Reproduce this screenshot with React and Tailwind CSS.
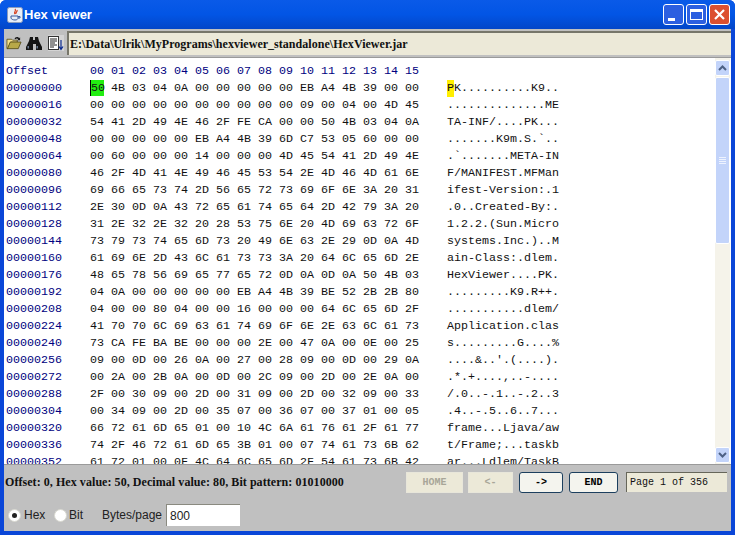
const rows = [
  "50 4B 03 04 0A 00 00 00 00 00 EB A4 4B 39 00 00",
  "00 00 00 00 00 00 00 00 00 00 09 00 04 00 4D 45",
  "54 41 2D 49 4E 46 2F FE CA 00 00 50 4B 03 04 0A",
  "00 00 00 00 00 EB A4 4B 39 6D C7 53 05 60 00 00",
  "00 60 00 00 00 14 00 00 00 4D 45 54 41 2D 49 4E",
  "46 2F 4D 41 4E 49 46 45 53 54 2E 4D 46 4D 61 6E",
  "69 66 65 73 74 2D 56 65 72 73 69 6F 6E 3A 20 31",
  "2E 30 0D 0A 43 72 65 61 74 65 64 2D 42 79 3A 20",
  "31 2E 32 2E 32 20 28 53 75 6E 20 4D 69 63 72 6F",
  "73 79 73 74 65 6D 73 20 49 6E 63 2E 29 0D 0A 4D",
  "61 69 6E 2D 43 6C 61 73 73 3A 20 64 6C 65 6D 2E",
  "48 65 78 56 69 65 77 65 72 0D 0A 0D 0A 50 4B 03",
  "04 0A 00 00 00 00 00 EB A4 4B 39 BE 52 2B 2B 80",
  "04 00 00 80 04 00 00 16 00 00 00 64 6C 65 6D 2F",
  "41 70 70 6C 69 63 61 74 69 6F 6E 2E 63 6C 61 73",
  "73 CA FE BA BE 00 00 00 2E 00 47 0A 00 0E 00 25",
  "09 00 0D 00 26 0A 00 27 00 28 09 00 0D 00 29 0A",
  "00 2A 00 2B 0A 00 0D 00 2C 09 00 2D 00 2E 0A 00",
  "2F 00 30 09 00 2D 00 31 09 00 2D 00 32 09 00 33",
  "00 34 09 00 2D 00 35 07 00 36 07 00 37 01 00 05",
  "66 72 61 6D 65 01 00 10 4C 6A 61 76 61 2F 61 77",
  "74 2F 46 72 61 6D 65 3B 01 00 07 74 61 73 6B 62",
  "61 72 01 00 0F 4C 64 6C 65 6D 2F 54 61 73 6B 42",
];

const headers = ["00", "01", "02", "03", "04", "05", "06", "07", "08", "09", "10", "11", "12", "13", "14", "15"];

const toChar = (hex) => {
  const n = parseInt(hex, 16);
  return n > 32 && n < 127 ? String.fromCharCode(n) : ".";
};

function HexRow({ index, bytes }) {
  const offset = String(index * 16).padStart(8, "0");
  return (
    <div className="flex h-[17px] items-center leading-[17px]">
      <span className="w-[84px] shrink-0 text-[#000080]">{offset}</span>
      <div className="flex w-[357px] shrink-0">
        {bytes.map((b, i) => (
          <span key={i} className="w-[21px] shrink-0">
            <span className={i === 0 && index === 0 ? "inline-block h-[16px] w-[14px] border-l border-black bg-[#22ee11] leading-[16px]" : ""}>{b}</span>
          </span>
        ))}
      </div>
      <div className="flex">
        {bytes.map((b, i) => (
          <span key={i} className={i === 0 && index === 0 ? "w-[7px] bg-[#ffee00]" : "w-[7px]"}>{toChar(b)}</span>
        ))}
      </div>
    </div>
  );
}

function TitleButton({ children, className }) {
  return (
    <div className={"flex h-[21px] w-[21px] items-center justify-center rounded-[3px] border border-white " + className}>
      {children}
    </div>
  );
}

function JavaIcon() {
  return (
    <svg width="16" height="16" viewBox="0 0 16 16">
      <rect x="0.5" y="0.5" width="15" height="15" rx="2" fill="#e8eef8" stroke="#8a9bbd" />
      <path d="M8 2c2 2-2 3 0 5M10 3c1 2-2 2-1 4" fill="none" stroke="#d8401c" strokeWidth="1.2" />
      <path d="M4 9h7v2c0 1-1 2-3 2s-4-1-4-2zM11 9.5h2v1.5h-2" fill="none" stroke="#3a5a9c" strokeWidth="1" />
    </svg>
  );
}

function FolderIcon() {
  return (
    <svg width="16" height="16" viewBox="0 0 17 16">
      <path d="M1 4h5l1 1h5v2H5L2 14H1z" fill="#f6e08a" stroke="#4a4010" strokeWidth="0.8" />
      <path d="M4.5 7H16l-3 7H1.5z" fill="#b8a848" stroke="#4a4010" strokeWidth="0.8" />
      <path d="M9 3c2-2 4-2 5 0l1-1v3h-3l1-1c-1-1-2-1-3 0z" fill="#1a1a1a" />
    </svg>
  );
}

function BinocularsIcon() {
  return (
    <svg width="16" height="15" viewBox="0 0 16 15" fill="#151515">
      <path d="M4 1h3v3h2V1h3l1 4 3 6v3h-6V8H7v6H0v-3l3-6z" />
      <rect x="1.5" y="10" width="1.5" height="2.5" fill="#6a7a90" />
      <rect x="10.5" y="10" width="1.5" height="2.5" fill="#6a7a90" />
    </svg>
  );
}

function SortIcon() {
  return (
    <svg width="16" height="16" viewBox="0 0 16 16">
      <rect x="0.5" y="1.5" width="10" height="13" fill="#fff" stroke="#333" />
      <path d="M2 4h7M2 6h7M2 8h5M2 10h7M2 12h4" stroke="#222" strokeWidth="1" />
      <path d="M13 5v9M11 11.5l2 3 2-3" fill="none" stroke="#0a2a90" strokeWidth="1.2" />
    </svg>
  );
}

function ScrollArrow({ up }) {
  return (
    <div className="flex h-[16px] w-[15px] items-center justify-center rounded-[2px] border border-white bg-[#c3d4fa]">
      <svg width="9" height="6" viewBox="0 0 9 6">
        <path d={up ? "M1 5l3.5-3.5L8 5" : "M1 1l3.5 3.5L8 1"} fill="none" stroke="#4d6185" strokeWidth="2" />
      </svg>
    </div>
  );
}

function NavButton({ label, width, disabled }) {
  const look = disabled
    ? "border-[#e8e6da] bg-[#ece9d8] text-[#a8a698] rounded-none"
    : "border-[#1c3f5e] bg-[#f4f4ee] text-black rounded-[3px]";
  return (
    <div className={"flex h-[21px] items-center justify-center border font-['Liberation_Mono',monospace] text-[10px] font-bold " + width + " " + look}>
      {label}
    </div>
  );
}

function Radio({ checked }) {
  return (
    <div className="flex h-[13px] w-[13px] items-center justify-center rounded-full border border-[#d8d8d0] bg-white">
      {checked && <div className="h-[5px] w-[5px] rounded-full bg-[#222]" />}
    </div>
  );
}

export default function App() {
  return (
    <div className="flex h-[535px] w-[735px] flex-col overflow-hidden rounded-t-[6px] bg-[#0a46d8]">
      <div className="flex h-[29px] shrink-0 items-center bg-gradient-to-b from-[#0a5ae8] via-[#0255e5] to-[#0346c8] pl-[7px] pr-[5px]">
        <JavaIcon />
        <span className="ml-[1px] pt-[1px] font-['Liberation_Sans',sans-serif] text-[13px] font-bold text-white">Hex viewer</span>
        <div className="ml-auto flex gap-[2px]">
          <TitleButton className="bg-[#2c5fe0]">
            <div className="mr-[5px] mt-[9px] h-[3px] w-[7px] bg-white" />
          </TitleButton>
          <TitleButton className="bg-[#2c5fe0]">
            <div className="h-[11px] w-[13px] border border-t-[3px] border-white" />
          </TitleButton>
          <TitleButton className="bg-[#dc5030]">
            <svg width="13" height="13" viewBox="0 0 13 13">
              <path d="M2 2l9 9M11 2l-9 9" stroke="#fff" strokeWidth="2.2" />
            </svg>
          </TitleButton>
        </div>
      </div>

      <div className="mx-[4px] mb-[4px] flex min-h-0 flex-1 flex-col bg-[#c0c0c0]">
        <div className="flex h-[29px] shrink-0 items-center border-b border-[#9a9a9a] pl-[2px]">
          <div className="flex w-[61px] shrink-0 items-center gap-[4px]">
            <FolderIcon />
            <BinocularsIcon />
            <div className="ml-[2px] bg-[#d4d4d4]">
              <SortIcon />
            </div>
          </div>
          <div className="flex h-[24px] flex-1 items-center border-l-2 border-t-2 border-[#77766a] bg-[#ece9d8] pl-[1px] font-['Liberation_Serif',serif] text-[12px] font-bold tracking-[0.03px] text-[#111]">
            {"E:\\Data\\Ulrik\\MyPrograms\\hexviewer_standalone\\HexViewer.jar"}
          </div>
        </div>

        <div className="flex h-[407px] shrink-0 overflow-hidden border-b border-[#9a9a9a] bg-white">
          <div className="min-w-0 flex-1 overflow-hidden whitespace-pre pl-[2px] pt-[5px] font-['Liberation_Mono',monospace] text-[11.67px] text-[#111]">
            <div className="flex h-[17px] items-center text-[#000080]">
              <span className="w-[84px] shrink-0">Offset</span>
              {headers.map((h) => (
                <span key={h} className="w-[21px] shrink-0">{h}</span>
              ))}
            </div>
            {rows.map((r, i) => (
              <HexRow key={i} index={i} bytes={r.split(" ")} />
            ))}
          </div>
          <div className="mr-[1px] flex w-[15px] shrink-0 flex-col bg-[#f5f3ea] pb-[1px] pt-[2px]">
            <ScrollArrow up />
            <div className="mt-[1px] flex h-[167px] items-center justify-center rounded-[2px] border border-white bg-[#c3d4fa]">
              <div className="flex w-[7px] flex-col gap-[1px]">
                <div className="h-[1px] bg-[#eef3ff]" />
                <div className="h-[1px] bg-[#eef3ff]" />
                <div className="h-[1px] bg-[#eef3ff]" />
                <div className="h-[1px] bg-[#eef3ff]" />
              </div>
            </div>
            <div className="flex-1" />
            <ScrollArrow />
          </div>
        </div>

        <div className="flex flex-1 flex-col">
          <div className="flex h-[34px] items-center pl-[1px] pr-[4px]">
            <span className="font-['Liberation_Serif',serif] text-[12px] font-bold tracking-[0.06px] text-[#111]">
              Offset: 0, Hex value: 50, Decimal value: 80, Bit pattern: 01010000
            </span>
            <div className="ml-auto flex items-center">
              <NavButton label="HOME" width="w-[57px]" disabled />
              <div className="w-[5px]" />
              <NavButton label="<-" width="w-[45px]" disabled />
              <div className="w-[6px]" />
              <NavButton label="->" width="w-[44px]" />
              <div className="w-[6px]" />
              <NavButton label="END" width="w-[49px]" />
              <div className="ml-[8px] flex h-[20px] w-[101px] items-center border-l border-t border-[#66665a] bg-[#ece9d8] pl-[3px] font-['Liberation_Mono',monospace] text-[10px] text-[#111]">
                Page 1 of 356
              </div>
            </div>
          </div>
          <div className="mt-[5px] flex items-center pl-[4px] font-['Liberation_Sans',sans-serif] text-[12px] text-[#222]">
            <Radio checked />
            <span className="ml-[3px] w-[30px]">Hex</span>
            <Radio />
            <span className="ml-[2px] w-[33px]">Bit</span>
            <span className="w-[64px]">Bytes/page</span>
            <div className="flex h-[22px] w-[74px] items-center border-l border-t border-[#8a8a80] bg-white pl-[3px]">800</div>
          </div>
        </div>
      </div>
    </div>
  );
}
